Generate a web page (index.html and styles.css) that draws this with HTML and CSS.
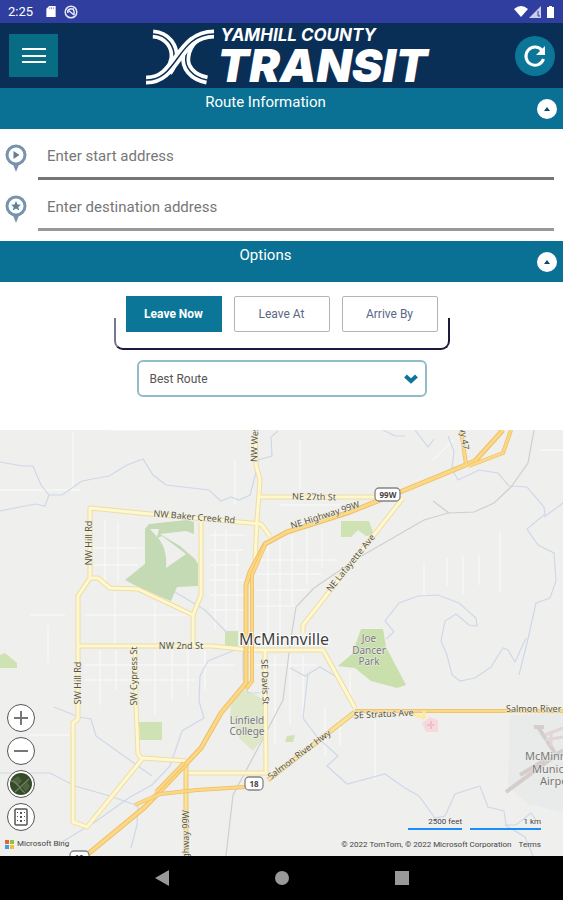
FILE: index.html
```html
<!DOCTYPE html>
<html lang="en">
<head>
    <meta charset="UTF-8">
    <meta name="viewport" content="width=device-width, initial-scale=1.0">
    <title>Yamhill County Transit</title>
    <link rel="stylesheet" href="styles.css">
</head>
<body>

    <div class="status-bar">
        <span class="clock">2:25</span>
        <svg class="status-icon" viewBox="0 0 12 14"><path d="M4 1h7v12H1V4z" fill="#fff"/><path d="M4.500 2.500v2M6.500 2.500v2M8.500 2.500v2" stroke="#8c90d0" stroke-width="1"/></svg>
        <svg class="status-icon status-icon-round" viewBox="0 0 14 14" fill="none" stroke="#e4e6fa" stroke-width="1.500"><circle cx="7" cy="7" r="5.800"/><path d="M4 8a3 3 0 0 1 6-2v4M4 5l6 5M7 4h3"/></svg>
        <svg class="status-signals" viewBox="0 0 44 14" fill="#fff">
            <path d="M1 4q7-6 14 0L8 12z"/>
            <path d="M28 1v12H16z" opacity=".75"/>
            <path d="M25 6v5h2" fill="none" stroke="#303f9f" stroke-width="1"/>
            <path d="M34 2h2V1h3v1h2v11h-7z"/>
        </svg>
    </div>

    <header class="header">
        <button class="menu-btn" type="button" aria-label="Menu">
            <svg width="24" height="18" viewBox="0 0 24 18" stroke="#fff" stroke-width="2"><path d="M0 2h24M0 9h24M0 15h24"/></svg>
        </button>
        <div class="logo">
            <svg class="logo-mark" viewBox="0 0 70 58" fill="none">
                <g stroke="#fff" stroke-width="9">
                    <path d="M7 7C22 8 29 20 28 31C27 38 25 41 22 45"/>
                    <path d="M61 53C46 50 38 40 40 29C41 22 43 18 48 13"/>
                </g>
                <g stroke="#0a2f56" stroke-width="1.500">
                    <path d="M7 7C22 8 29 20 28 31C27 38 25 41 22 45"/>
                    <path d="M61 53C46 50 38 40 40 29C41 22 43 18 48 13"/>
                </g>
                <path d="M0 53C32 54 31 7 68 7" stroke="#fff" stroke-width="9"/>
                <path d="M0 53C32 54 31 7 68 7" stroke="#0a2f56" stroke-width="1.500"/>
            </svg>
            <div class="logo-text">
                <span class="logo-small">YAMHILL COUNTY</span>
                <span class="logo-big">TRANSIT</span>
            </div>
        </div>
        <button class="refresh-btn" type="button" aria-label="Refresh">
            <svg width="24" height="24" viewBox="0 0 24 24"><path d="M19 6.500A9 9 0 1 0 20.500 15" fill="none" stroke="#fff" stroke-width="3"/><path d="M22 2v9h-9z" fill="#fff"/></svg>
        </button>
    </header>

    <main class="main">
        <div class="section-bar">
            <h2>Route Information</h2>
            <button class="toggle-btn" type="button" aria-label="Collapse route information">
                <svg width="6" height="4" viewBox="0 0 6 4"><path d="M0 4L3 0l3 4z" fill="#0b4a66"/></svg>
            </button>
        </div>

        <div class="fields">
            <div class="field">
                <label for="start" aria-label="Start address">
                    <svg width="22" height="28" viewBox="0 0 22 28"><path d="M7 18h8l-4 10z" fill="#7893ad"/><circle cx="11" cy="11" r="9" fill="#fff" stroke="#7893ad" stroke-width="3"/><path d="M8.500 7l6 4-6 4z" fill="#5f7f9e"/></svg>
                </label>
                <input type="text" id="start" placeholder="Enter start address">
            </div>
            <div class="field field-destination">
                <label for="destination" aria-label="Destination address">
                    <svg width="22" height="28" viewBox="0 0 22 28"><path d="M7 18h8l-4 10z" fill="#7893ad"/><circle cx="11" cy="11" r="9" fill="#fff" stroke="#7893ad" stroke-width="3"/><path d="M11 6l1.500 3.500 3.500.2-2.700 2.300 1 3.500-3.300-2-3.300 2 1-3.500L6 9.700l3.500-.2z" fill="#5f7f9e"/></svg>
                </label>
                <input type="text" id="destination" placeholder="Enter destination address">
            </div>
        </div>

        <div class="section-bar">
            <h2>Options</h2>
            <button class="toggle-btn" type="button" aria-label="Collapse options">
                <svg width="6" height="4" viewBox="0 0 6 4"><path d="M0 4L3 0l3 4z" fill="#0b4a66"/></svg>
            </button>
        </div>

        <div class="options">
            <div class="time-group">
                <button class="time-btn active" type="button">Leave Now</button>
                <button class="time-btn" type="button">Leave At</button>
                <button class="time-btn" type="button">Arrive By</button>
            </div>
            <div class="select-box">
                <select aria-label="Route preference">
                    <option>Best Route</option>
                </select>
                <svg class="chevron" width="14" height="10" viewBox="0 0 14 10"><path d="M1.500 2l5.500 5 5.500-5" fill="none" stroke="#0b7698" stroke-width="4"/></svg>
            </div>
        </div>

        <div class="map">
            <svg class="map-canvas" viewBox="0 430 563 426" preserveAspectRatio="xMidYMid slice">
                <rect x="-500" y="0" width="2000" height="1400" fill="#efefed"/>

                <!-- parks and grounds -->
                <path d="M510 716l53-4v100l-35-8-20-18z" fill="#e9eaea"/>
                <path d="M149 524l38-4 7 2v12l-8-3-26 3 20 12 15 13 3 5v22l-21 1-6 14-31-13-15-8 20-16v-35z" fill="#c4dab5"/>
                <path d="M162 536l12 9 12 9-20 14c1-12-1-22-8-30zM150 529h9l-2 8z" fill="#efefed"/>
                <path d="M341 521h28l5 14-8 1-8-6-7 7h-10z" fill="#cfe2b3"/>
                <path d="M361 629h22l3 18 20 38-9 3-26-7-16-13-17-2 14-12z" fill="#c9e0ad"/>
                <path d="M139 722h23v18h-22zM225 631h13v15h-13z" fill="#cfe2b3"/>
                <path d="M0 655l5-2 12 10v5H0zM287 736l8-1-2 7h-8z" fill="#cfe2b3"/>
                <path d="M232 700l12-11 21 11v35l-12 16-13-12-10-25z" fill="#dee7c8"/>

                <!-- side streets -->
                <g fill="none" stroke="#f8f8f7" stroke-width="1.500">
                    <path d="M93 548h50M93 565h45M105 520v65M118 522v60M0 490h80M73 432v58M210 535h35M210 550h33M210 565h30M210 580h34M210 595h34M210 610h34M215 530v100M226 530v98M237 550v80"/>
                    <path d="M257 560h80M257 574h65M257 590h52M257 606h40M268 545v95M280 540v95M292 535v70M307 530v55M322 528v40M85 665h150M85 680h110M100 650v55M116 650v40M155 650v65M172 650v50M188 650v45M205 650v40M85 615h105M155 603v40M115 592v52"/>
                    <path d="M424 562v34M447 558v28M463 556v38M479 555v30M500 532v60M350 670v35M325 706v50M340 720v26M375 720v60M255 665h62M275 655v90M290 655v70M303 655v65M30 615h35M48 625v38M30 735h40M235 460v45M300 440v50M280 505h60M540 450h23M433 460l20-20M110 430h90"/>
                </g>

                <!-- rivers -->
                <g fill="none" stroke="#cfd8e8" stroke-width="1.200">
                    <path d="M0 462l22 4h11l8 19 8 10h13l20-14 27-5 18-11 16-6 10 16 13 10 43 5 12 11 10-4 8 3 11-5 5-19 3-16 14-4-1-19 7-6"/>
                    <path d="M49 495l-4 11-10-2-35 7"/>
                    <path d="M383 430l12 6h10M415 430l13 17 6-8M448 436l6 15-2 18 6 11 21-10 19 3 11 13 18 1 17 20 1 7-18 15 11 16 16 8 2 28-6 17-14 5-9 40-8 32M544 517l19-14"/>
                    <path d="M386 639l8-7-9-11 14-18 19-7 20-1 21 8 17 15 1 8-8-1-13-11-11 7-4 20 6 14 5 20 8 6 15-3 16-11 12-19 5 2 7 12 11-24"/>
                    <path d="M290 668l15 8 15-9 15 9M308 673l-5 45 15 20 20 18-11 10 20 18 38-10 20 14 14 8 16 22 10-2 10-22 25-8 8 21 16 4 2 14h10l15-12 5 7M505 825l20 12 8 19"/>
                    <path d="M175 592l30 18 23 24M240 648l-32 13-8 15-1 25 5 17-22 13-12 35-18 19-22 12-35 25-33 20"/>
                    <path d="M54 707l25 10 12 2 5 17 28 20 28 20M0 773h50l25 13 35 10 28 10-1 19-6 23M243 650v28l5 15h12"/>
                </g>

                <!-- railway -->
                <path d="M534 430l-6 33-17 24-17 16-20 9-26 1-24 7-66 38-44 30-18 19-5 31-8 62-26 50-24 45-7 61M433 501l16 12" fill="none" stroke="#cfcfcf" stroke-width="1.200"/>

                <!-- airport -->
                <path d="M506 792l57-42M520 775l25-15M538 727l17 26M534 727h10" fill="none" stroke="#d5cdcb" stroke-width="4"/>
                <path d="M545 735l18-7M545 740l18-3M551 731v15" fill="none" stroke="#e2d5d6" stroke-width="3"/>
                <path d="M422 723l8-6 8 3v12h-12z" fill="#f5d9dc"/>
                <path d="M427 725h7M431 721v8" stroke="#eebfc6" stroke-width="2"/>

                <!-- roads -->
                <g fill="none" stroke-linejoin="round">
                    <path d="M270 536l-9-12-111-10-60-6v70l-12 18v123l-5 4v99l14 5 56-69 43 3M90 578h8l12 10 28 1 55 26 8-20v-73M193 615v31M78 646h134l38 4h73l32 58M135 646l1 60 2 48 4 5M255 430l1 35 4 15-3 40-2 40M260 497h115M403 498L303 625v8M265 650l1 123h-80" stroke="#eddda6" stroke-width="5"/>
                    <path d="M270 536l-9-12-111-10-60-6v70l-12 18v123l-5 4v99l14 5 56-69 43 3M90 578h8l12 10 28 1 55 26 8-20v-73M193 615v31M78 646h134l38 4h73l32 58M135 646l1 60 2 48 4 5M255 430l1 35 4 15-3 40-2 40M260 497h115M403 498L303 625v8M265 650l1 123h-80" stroke="#fff8cf" stroke-width="3"/>
                    <path d="M186 762v94M268 780l87-68" stroke="#e8c778" stroke-width="5"/>
                    <path d="M186 762v94M268 780l87-68" stroke="#fbe295" stroke-width="3"/>
                    <path d="M503 430l-28 31-36 15-39 16-50 20-63 20-22 12-15 28-4 13v98l-25 30-20 35-17 18-39 41-57 47" stroke="#edbf67" stroke-width="5"/>
                    <path d="M503 430l-28 31-36 15-39 16-50 20-63 20-22 12-15 28-4 13v98l-25 30-20 35-17 18-39 41-57 47" stroke="#fdd884" stroke-width="3"/>
                    <path d="M511 430l-8 23-34 13M461 430l5 34M265 545l-13 30v106l-6 8M135 805l25-11 37-4 48-3M184 763l-28 29M355 711h208" stroke="#edbf67" stroke-width="4"/>
                    <path d="M511 430l-8 23-34 13M461 430l5 34M265 545l-13 30v106l-6 8M135 805l25-11 37-4 48-3M184 763l-28 29M355 711h208" stroke="#fdd884" stroke-width="2.500"/>
                    <path d="M410 713l14 5v-7" stroke="#fdeaa0" stroke-width="3"/>
                </g>

                <!-- route shields -->
                <g fill="#fff" stroke="#858585" stroke-width="1.300">
                    <rect x="375" y="488" width="25" height="13" rx="4"/>
                    <rect x="245" y="777" width="18" height="13" rx="4"/>
                    <rect x="70" y="851" width="19" height="13" rx="4"/>
                </g>
                <g class="shield-text">
                    <text x="388" y="498">99W</text>
                    <text x="254" y="787">18</text>
                    <text x="79" y="861">18</text>
                </g>

                <g class="road-text">
                    <text transform="translate(194 520) rotate(5)">NW Baker Creek Rd</text>
                    <text transform="translate(314 500) rotate(1)">NE 27th St</text>
                    <text transform="translate(326 518) rotate(-18)">NE Highway 99W</text>
                    <text transform="translate(353 565) rotate(-51)">NE Lafayette Ave</text>
                    <text transform="translate(92 543) rotate(-90)">NW Hill Rd</text>
                    <text transform="translate(81 683) rotate(-90)">SW Hill Rd</text>
                    <text transform="translate(137 676) rotate(-90)">SW Cypress St</text>
                    <text x="181" y="649">NW 2nd St</text>
                    <text transform="translate(262 682) rotate(88)">SE Davis St</text>
                    <text transform="translate(301 757) rotate(-37)">Salmon River Hwy</text>
                    <text transform="translate(384 717) rotate(-3)">SE Stratus Ave</text>
                    <text class="from-start" x="506" y="712">Salmon River Hwy</text>
                    <text class="from-start" transform="translate(257 462) rotate(-88)">NW Westside Rd</text>
                    <text class="to-end" transform="translate(189 810) rotate(-90)">Highway 99W</text>
                    <text class="to-end" transform="translate(463 450) rotate(82)">Hwy 47</text>
                </g>
                <g class="place-text">
                    <text x="369" y="642">Joe</text>
                    <text x="369" y="654">Dancer</text>
                    <text x="369" y="665">Park</text>
                    <text x="247" y="724">Linfield</text>
                    <text x="247" y="735">College</text>
                </g>
                <g class="place-text airport-text">
                    <text x="525" y="760">McMinnville</text>
                    <text x="532" y="773">Municipal</text>
                    <text x="540" y="785">Airport</text>
                </g>
                <text class="city-text" x="284" y="645">McMinnville</text>
            </svg>

            <div class="map-controls">
                <button type="button" aria-label="Zoom in"><svg width="16" height="16" viewBox="0 0 16 16" stroke="#777" stroke-width="2"><path d="M1 8h14M8 1v14"/></svg></button>
                <button type="button" aria-label="Zoom out"><svg width="16" height="16" viewBox="0 0 16 16" stroke="#777" stroke-width="2"><path d="M1 8h14"/></svg></button>
                <button type="button" aria-label="Map style"><svg width="22" height="22" viewBox="0 0 22 22"><circle cx="11" cy="11" r="11" fill="#344a2b"/><path d="M2 7l6-4 4 5-5 5zM12 14l5-5 3 4-4 6z" fill="#4d643d"/><path d="M1 8c7 0 8 8 14 12M5 19l14-13" fill="none" stroke="#6f7f62" stroke-width="1.300"/></svg></button>
                <button type="button" aria-label="Traffic"><svg width="14" height="18" viewBox="0 0 14 18"><rect x="1" y="1" width="12" height="16" rx="1" fill="#fff" stroke="#555" stroke-width="1.500"/><path d="M6 4h2v2H6zM6 8h2v2H6zM6 12h2v2H6zM3 4h1v1H3zM10 4h1v1h-1zM3 8h1v1H3zM10 8h1v1h-1zM3 12h1v1H3zM10 12h1v1h-1z" fill="#555"/></svg></button>
            </div>

            <div class="map-footer">
                <div class="bing">
                    <svg width="9" height="9" viewBox="0 0 9 9"><path d="M0 0h4v4H0z" fill="#e8603c"/><path d="M5 0h4v4H5z" fill="#8fc33c"/><path d="M0 5h4v4H0z" fill="#38a5e0"/><path d="M5 5h4v4H5z" fill="#f7be2d"/></svg>
                    <span>Microsoft Bing</span>
                </div>
                <div class="map-info">
                    <div class="scales">
                        <span class="scale scale-feet">2500 feet</span>
                        <span class="scale scale-km">1 km</span>
                    </div>
                    <div class="copyright"><span>© 2022 TomTom, © 2022 Microsoft Corporation</span><a href="#">Terms</a></div>
                </div>
            </div>
        </div>
    </main>

    <nav class="nav-bar">
        <button type="button" aria-label="Back"><svg width="16" height="16" viewBox="0 0 16 16"><path d="M1 8l14-8v16z" fill="#999"/></svg></button>
        <button type="button" aria-label="Home"><svg width="16" height="16" viewBox="0 0 16 16"><circle cx="8" cy="8" r="7" fill="#999"/></svg></button>
        <button type="button" aria-label="Recent apps"><svg width="16" height="16" viewBox="0 0 16 16"><path d="M1 1h14v14H1z" fill="#999"/></svg></button>
    </nav>

</body>
</html>
```

FILE: styles.css
```css
* {
    box-sizing: border-box;
}
body {
    margin: 0;
    min-height: 100vh;
    display: flex;
    flex-direction: column;
    font-family: Roboto, "Liberation Sans", sans-serif;
    background: #fff;
}
button {
    padding: 0;
    border: none;
    cursor: pointer;
    font-family: inherit;
    display: flex;
    align-items: center;
    justify-content: center;
}
svg {
    display: block;
}

/* status bar */
.status-bar {
    height: 23px;
    padding: 0 6px 0 8px;
    display: flex;
    align-items: center;
    background: #303f9f;
    color: #fff;
}
.clock {
    font-size: 13px;
    line-height: 23px;
    margin-right: 12px;
}
.status-icon {
    width: 12px;
    height: 13px;
    margin-right: 7px;
}
.status-icon-round {
    width: 14px;
    height: 14px;
}
.status-signals {
    width: 44px;
    height: 14px;
    margin-left: auto;
}

/* header */
.header {
    height: 65px;
    padding: 0 8px 0 9px;
    display: flex;
    align-items: center;
    justify-content: space-between;
    background: #0a2f56;
}
.menu-btn {
    width: 49px;
    height: 43px;
    background: #086c85;
}
.refresh-btn {
    width: 40px;
    height: 40px;
    border-radius: 50%;
    background: #0b7698;
}
.logo {
    display: flex;
    align-items: center;
    gap: 2px;
    color: #fff;
    font-family: Inter, sans-serif;
    font-style: italic;
}
.logo-mark {
    width: 70px;
    height: 58px;
}
.logo-text {
    display: flex;
    flex-direction: column;
    white-space: nowrap;
}
.logo-small {
    font-size: 17px;
    line-height: 18px;
    font-weight: 700;
    padding-left: 3px;
}
.logo-big {
    font-size: 46px;
    line-height: 42px;
    font-weight: 900;
}

/* form */
.main {
    flex: 1;
    display: flex;
    flex-direction: column;
}
.section-bar {
    height: 41px;
    padding-right: 6px;
    display: flex;
    align-items: center;
    background: #0a7194;
    color: #fff;
}
.section-bar h2 {
    flex: 1;
    align-self: flex-start;
    margin: 0;
    padding-right: 6px;
    font-size: 15px;
    line-height: 28px;
    font-weight: 400;
    text-align: center;
}
.toggle-btn {
    width: 20px;
    height: 20px;
    border-radius: 50%;
    background: #fff;
}
.fields {
    padding: 6px 9px 10px 5px;
    display: flex;
    flex-direction: column;
    gap: 6px;
}
.field {
    display: flex;
    align-items: center;
    gap: 11px;
}
.field input {
    flex: 1;
    min-width: 0;
    height: 45px;
    padding: 0 9px;
    border: none;
    border-bottom: 3px solid #757575;
    background: none;
    font-family: inherit;
    font-size: 15px;
}
.field-destination input {
    border-bottom-color: #999;
}
.field input::placeholder {
    color: #777;
}
.options {
    padding: 14px 0 33px;
    display: flex;
    flex-direction: column;
    align-items: center;
    gap: 10px;
}
.time-group {
    position: relative;
    display: flex;
    gap: 12px;
    padding: 0 12px 18px;
}
.time-group::before {
    content: "";
    position: absolute;
    inset: 22px 0 0;
    border: 2px solid #1b1b3d;
    border-top: none;
    border-left-color: #77778f;
    border-radius: 0 0 9px 9px;
}
.time-btn {
    position: relative;
    width: 96px;
    height: 36px;
    border: 1px solid #b4b4b8;
    border-radius: 2px;
    background: #fff;
    color: #5b6786;
    font-size: 12px;
}
.time-btn.active {
    border-color: #0b7698;
    border-radius: 0;
    background: #0b7698;
    color: #fff;
    font-weight: 700;
}
.select-box {
    position: relative;
    width: 290px;
}
.select-box select {
    appearance: none;
    width: 100%;
    height: 37px;
    padding: 0 11px;
    border: 2px solid #92bdc8;
    border-radius: 6px;
    background: #fff;
    color: #555;
    font-family: inherit;
    font-size: 12px;
}
.chevron {
    position: absolute;
    right: 9px;
    top: 14px;
    pointer-events: none;
}

/* map */
.map {
    position: relative;
    flex: 1;
    min-height: 320px;
    overflow: hidden;
    font-size: 8px;
    color: #444;
}
.map-canvas {
    position: absolute;
    width: 100%;
    height: 100%;
    font-family: "Noto Sans", sans-serif;
    text-anchor: middle;
}
.road-text {
    font-size: 9px;
    fill: #55534c;
    stroke: #f6f3e3;
    stroke-width: 1px;
    paint-order: stroke;
}
.place-text {
    font-size: 10px;
    fill: #777;
    stroke: #efefed;
    stroke-width: 1px;
    paint-order: stroke;
}
.airport-text {
    font-size: 11px;
    text-anchor: start;
}
.city-text {
    font-size: 16px;
    fill: #3f3f3f;
    stroke: #fff;
    stroke-width: 2px;
    paint-order: stroke;
}
.shield-text {
    font-size: 8px;
    font-weight: 700;
    fill: #444;
}
.from-start {
    text-anchor: start;
}
.to-end {
    text-anchor: end;
}
.map-controls {
    position: absolute;
    left: 7px;
    bottom: 25px;
    display: flex;
    flex-direction: column;
    gap: 5px;
}
.map-controls button {
    width: 28px;
    height: 28px;
    border: 1px solid #555;
    border-radius: 50%;
    background: #fff;
}
.map-footer {
    position: absolute;
    left: 5px;
    right: 22px;
    bottom: 5px;
    display: flex;
    align-items: flex-end;
    justify-content: space-between;
}
.bing {
    display: flex;
    align-items: center;
    gap: 3px;
    line-height: 12px;
    padding-bottom: 1px;
}
.map-info {
    display: flex;
    flex-direction: column;
    gap: 9px;
}
.scales {
    display: flex;
    justify-content: flex-end;
    gap: 8px;
}
.scale {
    border-bottom: 2px solid #1a8cff;
    line-height: 13px;
    text-align: right;
}
.scale-feet {
    width: 54px;
}
.scale-km {
    width: 71px;
}
.copyright {
    display: flex;
    justify-content: flex-end;
    gap: 7px;
    line-height: 12px;
}
.copyright a {
    color: inherit;
    text-decoration: none;
}

/* system navigation */
.nav-bar {
    height: 44px;
    display: flex;
    align-items: center;
    justify-content: center;
    gap: 80px;
    background: #000;
}
.nav-bar button {
    width: 40px;
    height: 40px;
    background: none;
}
```
